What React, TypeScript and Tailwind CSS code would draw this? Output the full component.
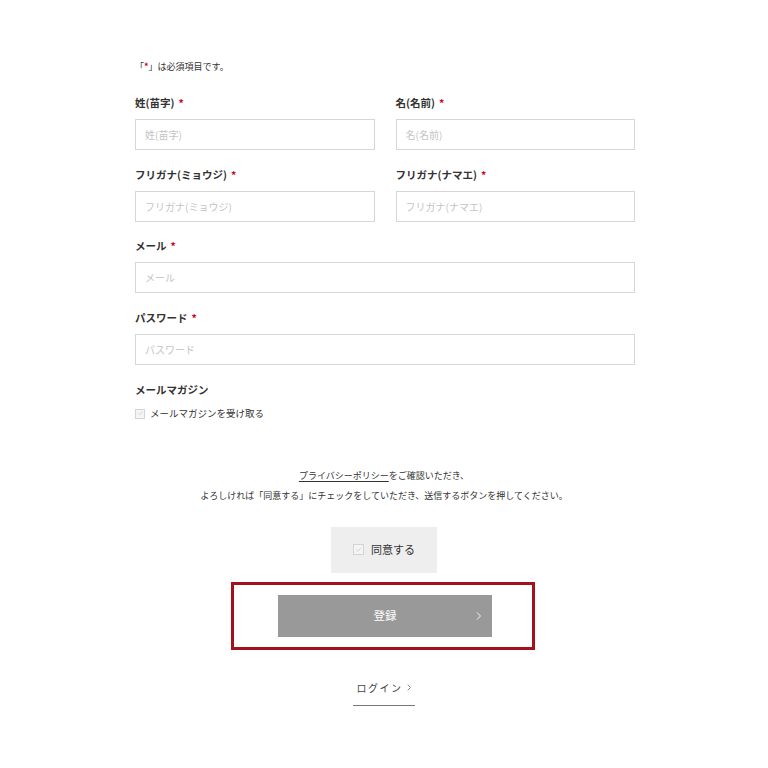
import React from "react";

const font = { fontFamily: '"Noto Sans CJK JP", "Noto Sans", sans-serif' };

function Req() {
  return <span className="ml-[4px] text-[#d0021b]">*</span>;
}

function Field({ label, placeholder }: { label: string; placeholder: string }) {
  return (
    <div className="flex flex-col">
      <label className="h-[16px] text-[10.5px] leading-[16px] font-semibold text-[#333]">
        {label}
        <Req />
      </label>
      <input
        className="mt-2 h-[31px] w-full border border-[#d6d6d6] bg-white px-[9px] text-[10px] text-[#333] outline-none placeholder:text-[#c4c4c4]"
        placeholder={placeholder}
      />
    </div>
  );
}

function Check({ size }: { size: string }) {
  return (
    <span
      className={`flex ${size} items-center justify-center border border-[#d4d4d4] bg-[#f4f4f4]`}
    >
      <svg viewBox="0 0 10 10" className="h-[80%] w-[80%]">
        <path d="M2 5.2 L4.2 7.3 L8.2 2.6" fill="none" stroke="#d0d0d0" strokeWidth="1.3" />
      </svg>
    </span>
  );
}

function Chevron({ color, h }: { color: string; h: string }) {
  return (
    <svg viewBox="0 0 6 10" className={h} style={{ width: "auto" }}>
      <path d="M1 1 L5 5 L1 9" fill="none" stroke={color} strokeWidth="1" />
    </svg>
  );
}

export default function App() {
  return (
    <div className="min-h-[768px] bg-white pt-[59px] text-[#333]" style={font}>
      <div className="mx-auto w-[500px] translate-x-[1px]">
        {/* ---------- 注記 ---------- */}
        <p className="h-[16px] text-[9px] leading-[16px]">
          「<span className="font-bold text-[#d0021b]">*</span>」は必須項目です。
        </p>

        {/* ---------- 入力項目 ---------- */}
        <div className="mt-[20px] flex flex-col gap-[16.5px]">
          <div className="grid grid-cols-2 gap-[21px]">
            <Field label="姓(苗字)" placeholder="姓(苗字)" />
            <Field label="名(名前)" placeholder="名(名前)" />
          </div>
          <div className="grid grid-cols-2 gap-[21px]">
            <Field label="フリガナ(ミョウジ)" placeholder="フリガナ(ミョウジ)" />
            <Field label="フリガナ(ナマエ)" placeholder="フリガナ(ナマエ)" />
          </div>
          <Field label="メール" placeholder="メール" />
          <Field label="パスワード" placeholder="パスワード" />
        </div>

        {/* ---------- メールマガジン ---------- */}
        <div className="mt-[17px]">
          <p className="h-[16px] text-[10.5px] leading-[16px] font-semibold">メールマガジン</p>
          <div className="mt-2 flex h-[16px] items-center gap-[5px] text-[9.5px]">
            <Check size="h-[10px] w-[10px]" />
            <span>メールマガジンを受け取る</span>
          </div>
        </div>
      </div>

      {/* ---------- 同意 ---------- */}
      <div className="mt-[44px] flex flex-col items-center">
        <p className="text-center text-[9px] leading-[20px]">
          <a href="#" className="underline underline-offset-2">
            プライバシーポリシー
          </a>
          をご確認いただき、
          <br />
          よろしければ「同意する」にチェックをしていただき、送信するボタンを押してください。
        </p>

        <div className="mt-[21px] flex h-[46px] w-[106px] items-center justify-center gap-[7px] bg-[#eeeeee] text-[11px]">
          <Check size="h-[11px] w-[11px]" />
          <span>同意する</span>
        </div>

        <div className="mt-[9px] flex h-[68px] w-[304px] translate-x-[-1px] items-center justify-center border-[3px] border-[#a3111b]">
          <button className="relative h-[42px] w-[214px] translate-x-[2px] bg-[#999999] text-[11.5px] text-white">
            登録
            <span className="absolute top-1/2 right-[11px] -translate-y-1/2">
              <Chevron color="#ffffff" h="h-[9px]" />
            </span>
          </button>
        </div>

        <a
          href="#"
          className="mt-[30px] flex w-[62px] items-center justify-center border-b border-[#777] pb-[9px] text-[10px] leading-[16px] tracking-[1.5px] text-[#444]"
        >
          ログイン
          <span className="ml-[5px]">
            <Chevron color="#555555" h="h-[7px]" />
          </span>
        </a>
      </div>
    </div>
  );
}
